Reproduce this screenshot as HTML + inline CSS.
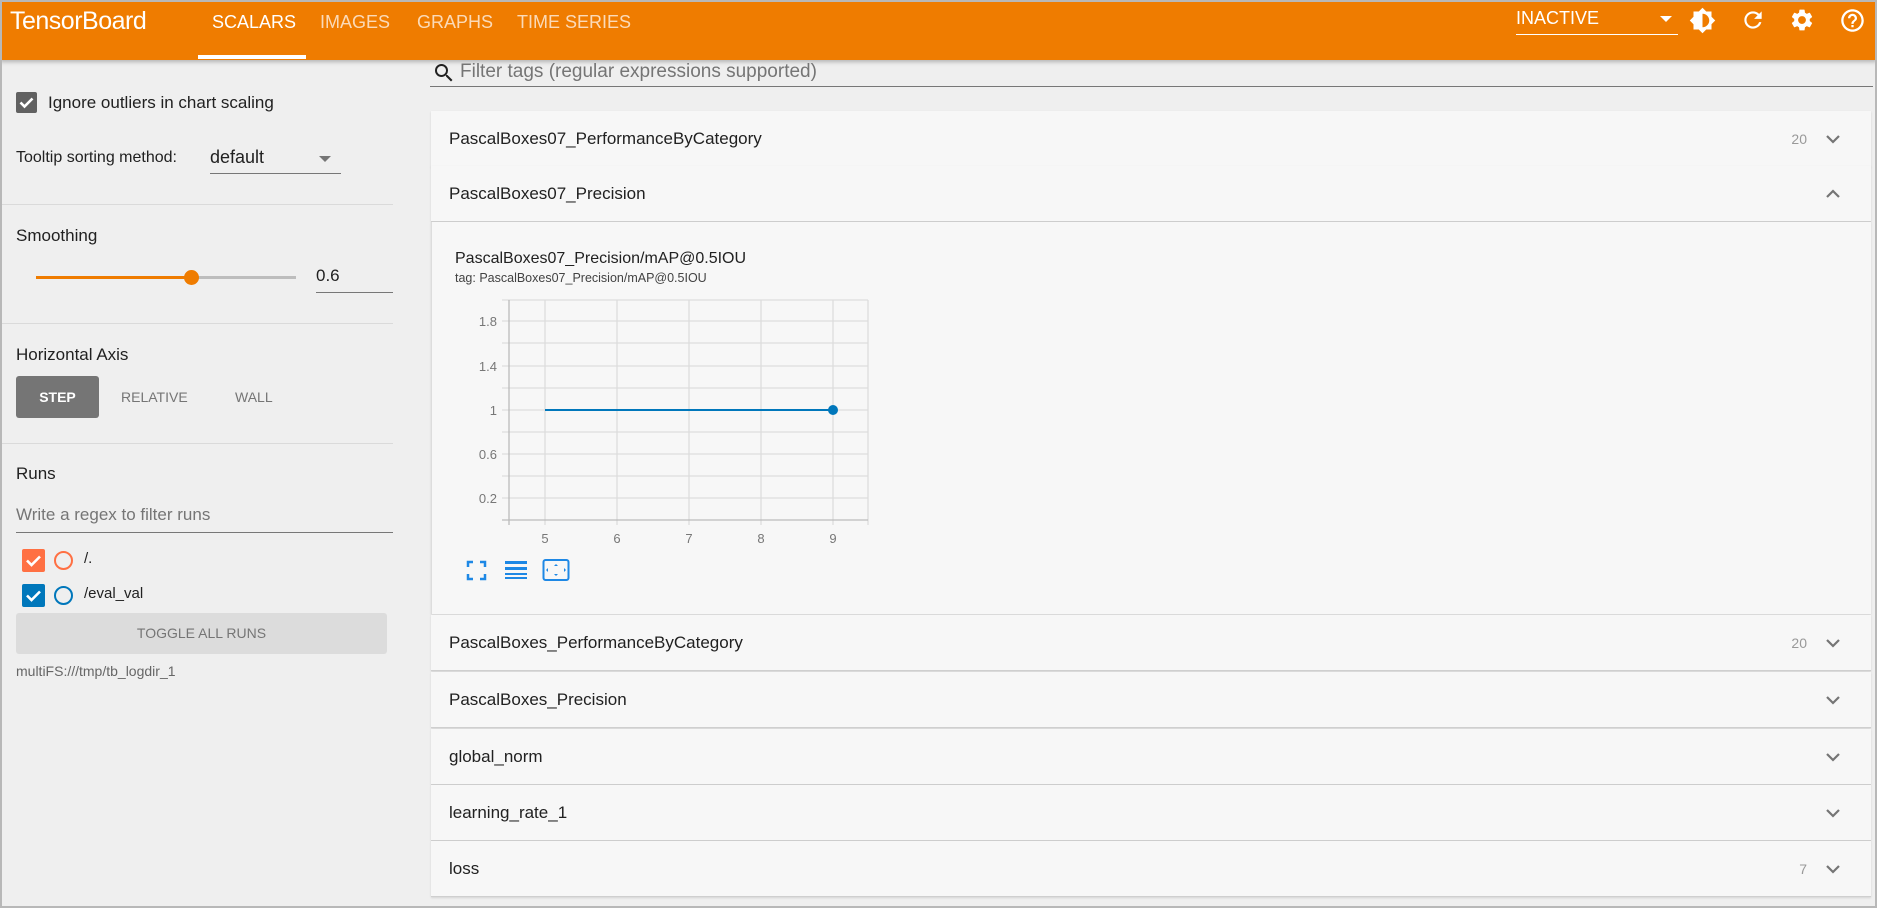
<!DOCTYPE html>
<html><head><meta charset="utf-8">
<style>
*{box-sizing:border-box;margin:0;padding:0}
body{width:1877px;height:908px;overflow:hidden;background:#efefef;font-family:"Liberation Sans",sans-serif;position:relative;color:#212121}
.a{position:absolute;white-space:nowrap}
#hdr{position:absolute;left:0;top:0;width:1877px;height:60px;background:#ef7c00;box-shadow:0 2px 4px rgba(0,0,0,.25)}
.tab{position:absolute;top:12px;font-size:18px;color:rgba(255,255,255,.72)}
.sep{position:absolute;left:0;width:393px;height:1px;background:#dadada}
.row{position:absolute;left:431px;width:1440px;height:56px;background:#f7f7f7;border-bottom:1px solid #cfcfcf;box-shadow:0 1px 2px rgba(0,0,0,.12)}
.row .t{position:absolute;left:18px;top:18px;font-size:17px;color:#212121}
.row .c{position:absolute right:64px;}
.row .c{position:absolute;right:64px;top:20px;font-size:14px;color:#999}
.row svg{position:absolute;right:30px;top:20px}
.gl{stroke:#ddd;stroke-width:1.3}
.yl{font-size:13px;fill:#777;text-anchor:end}
.xl{font-size:13px;fill:#777;text-anchor:middle}
#frame{position:absolute;left:0;top:0;width:1877px;height:908px;border:2px solid #b8b8b8;pointer-events:none}
</style></head><body>
<div id="hdr">
 <div class="a" style="left:10px;top:7px;font-size:25px;color:#fff;letter-spacing:-0.5px">TensorBoard</div>
 <div class="tab" style="left:212px;color:#fff">SCALARS</div>
 <div class="tab" style="left:320px">IMAGES</div>
 <div class="tab" style="left:417px">GRAPHS</div>
 <div class="tab" style="left:517px">TIME SERIES</div>
 <div class="a" style="left:198px;top:55px;width:108px;height:4px;background:#fff"></div>
 <div class="a" style="left:1516px;top:8px;font-size:18px;color:#fff">INACTIVE</div>
 <div class="a" style="left:1660px;top:16px;width:0;height:0;border-left:6px solid transparent;border-right:6px solid transparent;border-top:6px solid #fff"></div>
 <div class="a" style="left:1516px;top:34px;width:162px;height:1px;background:#fff"></div>
 <svg class="a" style="left:1689px;top:7px" width="27" height="27" viewBox="0 0 24 24"><path fill="#fff" d="M20 8.69V4h-4.69L12 .69 8.690 4H4v4.69L.69 12 4 15.31V20h4.69L12 23.31 15.31 20H20v-4.69L23.31 12 20 8.69zM12 18V6c3.31 0 6 2.69 6 6s-2.69 6-6 6z"/></svg>
 <svg class="a" style="left:1740px;top:7px" width="26" height="26" viewBox="0 0 24 24"><path fill="#fff" d="M17.65 6.35A7.958 7.958 0 0 0 12 4c-4.42 0-7.99 3.58-7.990 8s3.57 8 7.99 8c3.73 0 6.84-2.55 7.73-6h-2.08A5.990 5.990 0 0 1 12 18c-3.31 0-6-2.69-6-6s2.69-6 6-6c1.66 0 3.14.69 4.22 1.78L13 11h7V4l-2.35 2.35z"/></svg>
 <svg class="a" style="left:1789px;top:7px" width="26" height="26" viewBox="0 0 24 24"><path fill="#fff" d="M19.14 12.94c.04-.3.06-.61.06-.94s-.02-.64-.07-.94l2.03-1.58a.49.49 0 0 0 .12-.61l-1.92-3.32a.488.488 0 0 0-.59-.22l-2.39.96c-.5-.38-1.03-.7-1.62-.94l-.36-2.54a.484.484 0 0 0-.48-.41h-3.84c-.24 0-.43.17-.47.41l-.36 2.54c-.59.24-1.13.57-1.62.94l-2.39-.96a.48.48 0 0 0-.59.22L2.74 8.87c-.12.21-.08.47.12.61l2.03 1.58c-.05.3-.09.63-.09.94s.02.64.07.94l-2.03 1.58a.49.49 0 0 0-.12.61l1.92 3.32c.12.22.37.29.59.22l2.39-.96c.5.38 1.03.7 1.62.94l.36 2.54c.05.24.24.41.48.41h3.84c.24 0 .44-.17.47-.41l.36-2.54c.59-.24 1.130-.56 1.62-.94l2.39.96c.22.08.47 0 .59-.22l1.92-3.32c.12-.22.07-.47-.12-.61l-2.01-1.58zM12 15.6c-1.98 0-3.6-1.62-3.6-3.6s1.62-3.6 3.6-3.6 3.6 1.62 3.6 3.6-1.62 3.6-3.6 3.6z"/></svg>
 <svg class="a" style="left:1839px;top:7px" width="27" height="27" viewBox="0 0 24 24"><path fill="#fff" d="M11 18h2v-2h-2v2zm1-16C6.48 2 2 6.48 2 12s4.48 10 10 10 10-4.48 10-10S17.52 2 12 2zm0 18c-4.41 0-8-3.59-8-8s3.59-8 8-8 8 3.59 8 8-3.59 8-8 8zm0-14c-2.21 0-4 1.79-4 4h2c0-1.1.9-2 2-2s2 .9 2 2c0 2-3 1.75-3 5h2c0-2.25 3-2.5 3-5 0-2.21-1.79-4-4-4z"/></svg>
</div>

<!-- sidebar -->
<div class="a" style="left:16px;top:92px;width:21px;height:21px;background:#616161;border-radius:2px"></div>
<svg class="a" style="left:16px;top:92px" width="21" height="21" viewBox="0 0 21 21"><path d="M4.5 10.5l4 4 8-8" stroke="#fff" stroke-width="2.6" fill="none"/></svg>
<div class="a" style="left:48px;top:93px;font-size:17px">Ignore outliers in chart scaling</div>
<div class="a" style="left:16px;top:149px;font-size:16px">Tooltip sorting method:</div>
<div class="a" style="left:210px;top:147px;font-size:18px">default</div>
<div class="a" style="left:319px;top:156px;border-left:6px solid transparent;border-right:6px solid transparent;border-top:6px solid #757575"></div>
<div class="a" style="left:210px;top:173px;width:131px;height:1px;background:#777"></div>
<div class="sep" style="top:204px"></div>
<div class="a" style="left:16px;top:226px;font-size:17px">Smoothing</div>
<div class="a" style="left:36px;top:276px;width:260px;height:3px;background:#bdbdbd"></div>
<div class="a" style="left:36px;top:276px;width:156px;height:3px;background:#ef7c00"></div>
<div class="a" style="left:184px;top:270px;width:15px;height:15px;border-radius:50%;background:#ef7c00"></div>
<div class="a" style="left:316px;top:266px;font-size:17px">0.6</div>
<div class="a" style="left:316px;top:292px;width:77px;height:1px;background:#777"></div>
<div class="sep" style="top:323px"></div>
<div class="a" style="left:16px;top:345px;font-size:17px">Horizontal Axis</div>
<div class="a" style="left:16px;top:376px;width:83px;height:42px;background:#757575;border-radius:3px;color:#fff;font-size:14px;font-weight:bold;text-align:center;line-height:42px">STEP</div>
<div class="a" style="left:121px;top:389px;font-size:14px;color:#757575">RELATIVE</div>
<div class="a" style="left:235px;top:389px;font-size:14px;color:#757575">WALL</div>
<div class="sep" style="top:443px"></div>
<div class="a" style="left:16px;top:464px;font-size:17px">Runs</div>
<div class="a" style="left:16px;top:505px;font-size:17px;color:#757575">Write a regex to filter runs</div>
<div class="a" style="left:16px;top:532px;width:377px;height:1px;background:#777"></div>
<div class="a" style="left:22px;top:549px;width:23px;height:23px;background:#ff7043;border-radius:2px"></div>
<svg class="a" style="left:22px;top:549px" width="23" height="23"><path d="M5 11.5l4.5 4.5 8.5-8.5" stroke="#fff" stroke-width="2.6" fill="none"/></svg>
<div class="a" style="left:54px;top:551px;width:19px;height:19px;border-radius:50%;border:2px solid #ff7043"></div>
<div class="a" style="left:84px;top:550px;font-size:15px">/.</div>
<div class="a" style="left:22px;top:584px;width:23px;height:23px;background:#0077bb;border-radius:2px"></div>
<svg class="a" style="left:22px;top:584px" width="23" height="23"><path d="M5 11.5l4.5 4.5 8.5-8.5" stroke="#fff" stroke-width="2.6" fill="none"/></svg>
<div class="a" style="left:54px;top:586px;width:19px;height:19px;border-radius:50%;border:2px solid #0077bb"></div>
<div class="a" style="left:84px;top:585px;font-size:15px">/eval_val</div>
<div class="a" style="left:16px;top:613px;width:371px;height:41px;background:#dcdcdc;border-radius:3px;text-align:center;line-height:41px;font-size:14px;color:#757575">TOGGLE ALL RUNS</div>
<div class="a" style="left:16px;top:663px;font-size:14px;color:#666">multiFS:///tmp/tb_logdir_1</div>

<!-- main -->
<svg class="a" style="left:432px;top:61px" width="24" height="24" viewBox="0 0 24 24"><path fill="#212121" d="M15.5 14h-.79l-.28-.27A6.47 6.47 0 0 0 16 9.5 6.5 6.5 0 1 0 9.5 16c1.61 0 3.09-.59 4.23-1.57l.27.28v.79l5 4.99L20.49 19l-4.99-5zm-6 0C7.01 14 5 11.99 5 9.5S7.01 5 9.5 5 14 7.01 14 9.5 11.99 14 9.5 14z"/></svg>
<div class="a" style="left:460px;top:61px;font-size:19px;color:#757575">Filter tags (regular expressions supported)</div>
<div class="a" style="left:430px;top:86px;width:1443px;height:1px;background:#777"></div>

<div class="row" style="top:111px"><div class="t">PascalBoxes07_PerformanceByCategory</div><div class="c">20</div><svg width="16" height="16" viewBox="0 0 16 16"><path d="M2 5l6 6 6-6" stroke="#757575" stroke-width="2.2" fill="none"/></svg></div>
<div class="row" style="top:166px"><div class="t">PascalBoxes07_Precision</div><svg width="16" height="16" viewBox="0 0 16 16"><path d="M2 11l6-6 6 6" stroke="#757575" stroke-width="2.2" fill="none"/></svg></div>
<div class="a" style="left:431px;top:222px;width:1440px;height:392px;background:#f7f7f7;border-left:1px solid #ddd;box-shadow:0 1px 2px rgba(0,0,0,.12)"></div>
<div class="a" style="left:455px;top:250px;font-size:16px;color:#212121">PascalBoxes07_Precision/mAP@0.5IOU</div>
<div class="a" style="left:455px;top:271px;font-size:12.5px;color:#424242">tag: PascalBoxes07_Precision/mAP@0.5IOU</div>
<svg class="a" style="left:0;top:0" width="900" height="600">
 <g class="gl">
  <line x1="502" y1="321" x2="868" y2="321"/><line x1="502" y1="343" x2="868" y2="343"/>
  <line x1="502" y1="366" x2="868" y2="366"/><line x1="502" y1="388" x2="868" y2="388"/>
  <line x1="502" y1="410" x2="868" y2="410"/><line x1="502" y1="432" x2="868" y2="432"/>
  <line x1="502" y1="454" x2="868" y2="454"/><line x1="502" y1="476" x2="868" y2="476"/>
  <line x1="502" y1="498" x2="868" y2="498"/><line x1="502" y1="300" x2="868" y2="300"/>
  <line x1="545" y1="300" x2="545" y2="525"/><line x1="617" y1="300" x2="617" y2="525"/>
  <line x1="689" y1="300" x2="689" y2="525"/><line x1="761" y1="300" x2="761" y2="525"/>
  <line x1="833" y1="300" x2="833" y2="525"/><line x1="868" y1="300" x2="868" y2="525"/>
 </g>
 <line x1="509" y1="300" x2="509" y2="525" stroke="#bbb" stroke-width="1.3"/>
 <line x1="502" y1="520" x2="868" y2="520" stroke="#bbb" stroke-width="1.3"/>
 <text class="yl" x="497" y="326">1.8</text><text class="yl" x="497" y="371">1.4</text>
 <text class="yl" x="497" y="415">1</text><text class="yl" x="497" y="459">0.6</text>
 <text class="yl" x="497" y="503">0.2</text>
 <text class="xl" x="545" y="543">5</text><text class="xl" x="617" y="543">6</text>
 <text class="xl" x="689" y="543">7</text><text class="xl" x="761" y="543">8</text>
 <text class="xl" x="833" y="543">9</text>
 <line x1="545" y1="410" x2="833" y2="410" stroke="#0077bb" stroke-width="2"/>
 <circle cx="833" cy="410" r="5" fill="#0077bb"/>
 <path d="M468 567v-5h5M480 562h5v5M485 574v5h-5M473 579h-5v-5" stroke="#1e88e5" stroke-width="2.5" fill="none"/>
 <rect x="505" y="561" width="22" height="3" fill="#1e88e5"/><rect x="505" y="567" width="22" height="3" fill="#1e88e5"/><rect x="505" y="573" width="22" height="2" fill="#1e88e5"/><rect x="505" y="577" width="22" height="2" fill="#1e88e5"/>
 <rect x="543.5" y="560" width="25" height="20" rx="2" stroke="#1e88e5" stroke-width="2" fill="none"/>
 <path d="M554 566l2-2 2 2zM554 574l2 2 2-2zM548 568l-2 2 2 2zM564 568l2 2-2 2z" fill="#1e88e5"/>
</svg>

<div class="row" style="top:615px"><div class="t">PascalBoxes_PerformanceByCategory</div><div class="c">20</div><svg width="16" height="16" viewBox="0 0 16 16"><path d="M2 5l6 6 6-6" stroke="#757575" stroke-width="2.2" fill="none"/></svg></div>
<div class="row" style="top:672px"><div class="t">PascalBoxes_Precision</div><svg width="16" height="16" viewBox="0 0 16 16"><path d="M2 5l6 6 6-6" stroke="#757575" stroke-width="2.2" fill="none"/></svg></div>
<div class="row" style="top:729px"><div class="t">global_norm</div><svg width="16" height="16" viewBox="0 0 16 16"><path d="M2 5l6 6 6-6" stroke="#757575" stroke-width="2.2" fill="none"/></svg></div>
<div class="row" style="top:785px"><div class="t">learning_rate_1</div><svg width="16" height="16" viewBox="0 0 16 16"><path d="M2 5l6 6 6-6" stroke="#757575" stroke-width="2.2" fill="none"/></svg></div>
<div class="row" style="top:841px"><div class="t">loss</div><div class="c">7</div><svg width="16" height="16" viewBox="0 0 16 16"><path d="M2 5l6 6 6-6" stroke="#757575" stroke-width="2.2" fill="none"/></svg></div>
<div id="frame"></div>
</body></html>
